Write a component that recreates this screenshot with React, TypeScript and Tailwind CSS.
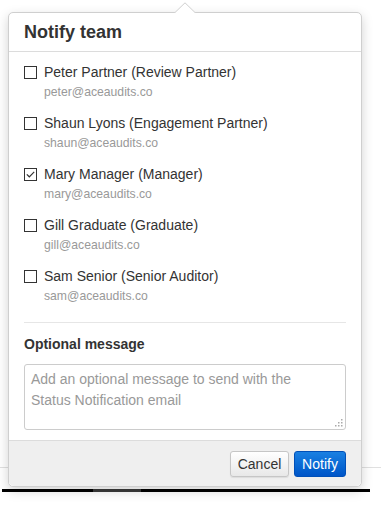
import React from 'react';

const people = [
  { name: 'Peter Partner (Review Partner)', email: 'peter@aceaudits.co', checked: false },
  { name: 'Shaun Lyons (Engagement Partner)', email: 'shaun@aceaudits.co', checked: false },
  { name: 'Mary Manager (Manager)', email: 'mary@aceaudits.co', checked: true },
  { name: 'Gill Graduate (Graduate)', email: 'gill@aceaudits.co', checked: false },
  { name: 'Sam Senior (Senior Auditor)', email: 'sam@aceaudits.co', checked: false },
];

const Checkbox: React.FC<{ checked: boolean }> = ({ checked }) => (
  <span className="flex h-[13px] w-[13px] shrink-0 items-center justify-center border border-[#333] bg-white">
    {checked && (
      <svg width="9" height="7" viewBox="0 0 9 7" fill="none">
        <path d="M0.8 3.4L3.3 5.8L8.2 0.8" stroke="#333" strokeWidth="1.2" />
      </svg>
    )}
  </span>
);

const App: React.FC = () => {
  return (
    <div className="relative h-[511px] w-[381px] overflow-hidden bg-white" style={{ fontFamily: '"Liberation Sans", Arial, sans-serif' }}>
      {/* page behind the popover */}
      <div className="pt-[467px]">
        <div className="h-px bg-[#e0e0e0]" />
        <div className="mx-[2px] mt-[21px] flex h-[3px] w-[368px] bg-black">
          <div className="ml-[91px] w-[48px] bg-[#3a3a3a]" />
        </div>
      </div>

      {/* popover */}
      <div className="absolute left-[8px] top-[12px] w-[354px] rounded-[5px] border border-[#cfcfcf] bg-white shadow-[0_4px_12px_rgba(0,0,0,0.18)]">
        <svg className="absolute left-[165px] top-[-11px]" width="22" height="12" viewBox="0 0 22 12">
          <polygon points="0,11.5 11,0.8 22,11.5" fill="white" stroke="#cfcfcf" strokeWidth="1" />
          <rect x="0" y="11" width="22" height="2" fill="white" />
        </svg>

        <div className="border-b border-[#dcdcdc] px-[15px] pb-[8px] pt-[8px]">
          <h3 className="text-[18px] font-bold leading-[22px] text-[#333]">Notify team</h3>
        </div>

        <div className="px-[15px] pb-[10px] pt-[10px]">
          <div className="flex flex-col gap-[11px]">
            {people.map((p) => (
              <div key={p.email} className="flex items-start gap-[7px]">
                <div className="flex h-[20px] items-center">
                  <Checkbox checked={p.checked} />
                </div>
                <div>
                  <div className="text-[14px] leading-[20px] text-[#333]">{p.name}</div>
                  <div className="text-[12.2px] leading-[20px] text-[#999]">{p.email}</div>
                </div>
              </div>
            ))}
          </div>

          <div className="mt-[16px] h-px bg-[#e6e6e6]" />

          <div className="mt-[11px] text-[14px] font-bold leading-[20px] text-[#333]">Optional message</div>

          <div className="relative mt-[10px]">
            <textarea
              className="block h-[66px] w-full resize-none rounded-[3px] border border-[#cccccc] pl-[6px] pr-[40px] pt-[4px] text-[14px] leading-[21px] text-[#333] placeholder:text-[#999] focus:outline-none"
              placeholder="Add an optional message to send with the Status Notification email"
            />
            <svg className="pointer-events-none absolute bottom-[3px] right-[3px]" width="8" height="8" viewBox="0 0 8 8">
              <rect x="6" y="0" width="1.5" height="1.5" fill="#aaa" />
              <rect x="3" y="3" width="1.5" height="1.5" fill="#aaa" />
              <rect x="6" y="3" width="1.5" height="1.5" fill="#aaa" />
              <rect x="0" y="6" width="1.5" height="1.5" fill="#aaa" />
              <rect x="3" y="6" width="1.5" height="1.5" fill="#aaa" />
              <rect x="6" y="6" width="1.5" height="1.5" fill="#aaa" />
            </svg>
          </div>
        </div>

        <div className="flex justify-end gap-[5px] rounded-b-[5px] border-t border-[#dcdcdc] bg-[#efefef] px-[15px] pb-[9px] pt-[10px]">
          <button className="h-[26px] w-[59px] rounded-[3px] border border-[#c6c6c6] bg-gradient-to-b from-white to-[#e8e8e8] text-[14px] text-[#333] shadow-[0_1px_1px_rgba(0,0,0,0.08)]">
            Cancel
          </button>
          <button className="h-[26px] w-[52px] rounded-[3px] border border-[#0050b8] bg-gradient-to-b from-[#1a80e2] to-[#0055c8] text-[14px] text-white">
            Notify
          </button>
        </div>
      </div>
    </div>
  );
};

export default App;
